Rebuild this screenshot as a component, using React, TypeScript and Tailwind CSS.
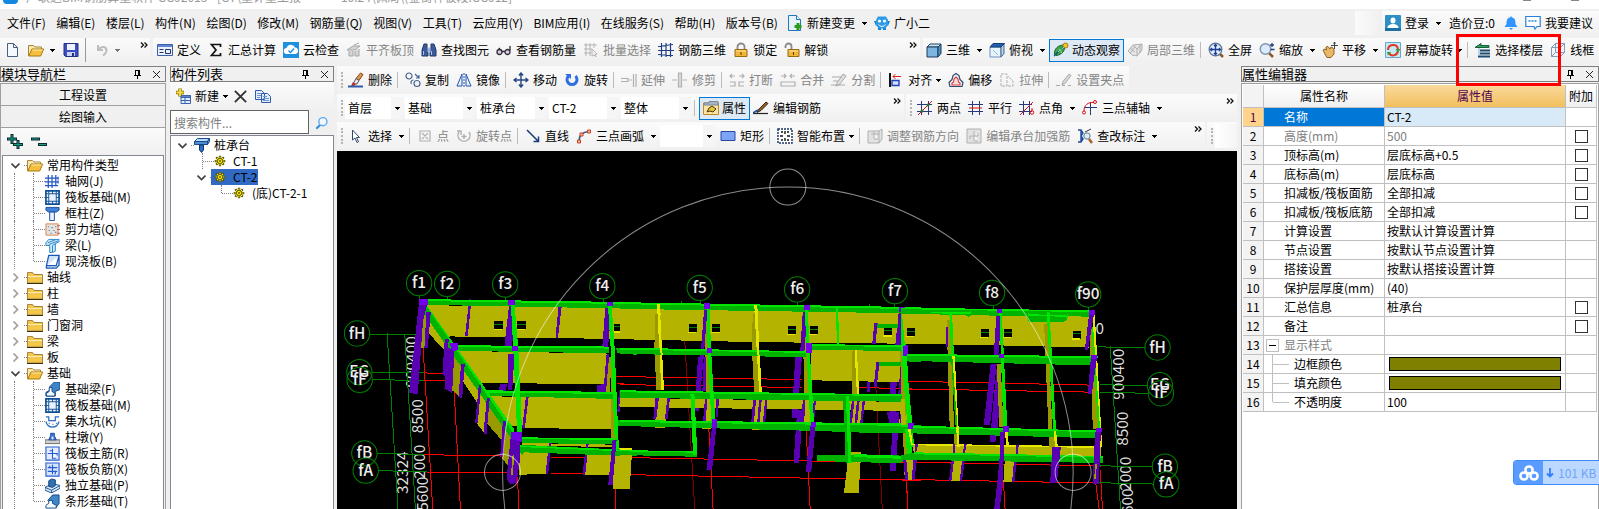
import { Fragment, type ReactNode } from 'react';
import clsx from 'clsx';

/* ---------- icons (16 x 16) ---------- */

const icons: Record<string, ReactNode> = {
  newFile: <path d="M3.5 1.5h6l4 4v9h-10zM9.5 1.5v4h4" fill="#f4f9ff" stroke="#4a5f7f" />,
  folderOpen: (
    <>
      <path d="M.5 14V3.500h5L7 5h6.500v3" fill="#f9e9b0" stroke="#a9853a" />
      <path d="M.8 14L4 7h11.700l-3 7z" fill="#f5bf3d" stroke="#a9780f" />
      <path d="M4.500 8h10" stroke="#fdeeb0" />
    </>
  ),
  folder: (
    <>
      <path d="M.5 14V3.500h5L7 5.500h8.500V14z" fill="#f3c64c" stroke="#a9853a" />
      <path d="M1 7h14v1H1z" fill="#fdf0b4" />
      <path d="M0 14.500h16" stroke="#3d2f10" />
    </>
  ),
  save: (
    <>
      <path d="M1 1.500h14v13H2.500L1 13z" fill="#3d4fc0" stroke="#23317f" />
      <path d="M4 2h8v6H4z" fill="#eef2ff" />
      <path d="M4 10h8v4H4z" fill="#c9d3f5" />
      <path d="M9 11h2v3H9z" fill="#23317f" />
    </>
  ),
  undo: <path d="M4 3v5h5M4.500 7.500C8 3 13 5 12.500 9c-.3 2.500-2 3.500-3.500 4.500" fill="none" stroke="#bdbdbd" strokeWidth="2" />,
  define: (
    <>
      <path d="M.5 2.500h15v11H.5z" fill="#e9effb" stroke="#3c5da8" />
      <path d="M1 3h14v2H1z" fill="#5f86d4" />
      <path d="M2.500 7.500h4m-4 3h4m2-3h5v4h-5z" fill="none" stroke="#24365f" />
    </>
  ),
  sum: <path d="M12.500 5V2.500h-9L8 8l-4.500 5.500h9V11" fill="none" stroke="#111" strokeWidth="1.700" />,
  cloudCheck: (
    <>
      <path d="M0 0h16v16H0z" fill="#1f8fe0" />
      <path d="M4 12a3 3 0 01-.5-6A4.500 4.500 0 0112 5.500a3.300 3.300 0 01.5 6.500z" fill="#fff" />
      <path d="M5.500 8.500l2 2 3.500-4" fill="none" stroke="#1f8fe0" strokeWidth="1.400" />
    </>
  ),
  alignTop: <path d="M1 8l6-4h7l-5 4zM3 9v5h4V9M9 9v5h4V7M8 3l5-2" fill="#d5d5d5" stroke="#a5a5a5" />,
  binoculars: (
    <>
      <path d="M3 2h3v4l1 2v6H1V8zM10 2h3l2 6v6H9V8l1-2z" fill="#3d5a98" stroke="#22386b" />
      <path d="M7 6h2v4H7zM2.500 9v4m8-4v4" fill="#8fa9dc" stroke="#a9c0ee" />
    </>
  ),
  glasses: <path d="M1 10a2.500 2.500 0 105 0 2.500 2.500 0 10-5 0m8 0a2.500 2.500 0 105 0 2.500 2.500 0 10-5 0M6 9.500h3M1 9l3-3m10 3V4" fill="#dce" stroke="#2c2c34" strokeWidth="1.300" />,
  batch: <path d="M1 3h13M1 7h8M1 11h7M3 1v13M7 1v13M11 1v5M9 7l5 5-2 .5L13 15l-2-2-2 1z" fill="none" stroke="#b4b4b4" />,
  rebar3d: <path d="M0 4.500l15-2M0 8.500h16M0 12.500l15 1M3.500 1v14M8 1v14M12.500 1v14" fill="none" stroke="#1f3d86" strokeWidth="1.200" />,
  lock: (
    <>
      <path d="M4.500 8V4.500a3.500 3 0 017 0V8" fill="none" stroke="#8a8a8a" strokeWidth="1.800" />
      <path d="M2 7.500h12v7H2z" fill="#f2b535" stroke="#9b6b12" />
      <path d="M3 9h10" stroke="#fde7a3" />
      <path d="M7.500 10h1v3h-1z" fill="#5b3c05" />
    </>
  ),
  unlock: (
    <>
      <path d="M1.500 6V4.500a3 3 0 016 0V8" fill="none" stroke="#8a8a8a" strokeWidth="1.800" />
      <path d="M4 7.500h11v7H4z" fill="#f2b535" stroke="#9b6b12" />
      <path d="M5 9h9" stroke="#fde7a3" />
      <path d="M9 10h1v3H9z" fill="#5b3c05" />
    </>
  ),
  cube: (
    <>
      <path d="M1 5l3-3h11l-3 3z" fill="#cfe6f8" stroke="#1d3c5c" />
      <path d="M1 5h11v10H1z" fill="#7db4e0" stroke="#1d3c5c" />
      <path d="M12 5l3-3v9.500L12 15z" fill="#4f8dc2" stroke="#1d3c5c" />
    </>
  ),
  cubeTop: (
    <>
      <path d="M1 5h11v10H1z" fill="#e8f3fc" stroke="#6b93bd" />
      <path d="M12 5l3-3v9.500L12 15z" fill="#b8d4ec" stroke="#3d628b" />
      <path d="M1 5l3-3.500h11.500L12 5z" fill="#245ea8" stroke="#153e78" />
      <path d="M4 8l5 5" stroke="#8ab6de" />
    </>
  ),
  orbit: (
    <>
      <path d="M1.500 12C1 7 5 3 11 3c2 5-2 10-8 10.500z" fill="#3da54a" stroke="#14652a" />
      <path d="M1 14l3-3 8-7" stroke="#0b4b8c" strokeWidth="1.300" />
      <circle cx="12.500" cy="3.500" r="2.500" fill="#f1c232" stroke="#a57b0a" />
      <path d="M6 7l3 4M5 10l6-5" stroke="#9fe08f" />
    </>
  ),
  local3d: <path d="M1 9l5-6 9-1v6l-5 6-5-1zM6 3l4 4v7M10 7l5-5M3 6l5 4M3 12l5-8M13 3v8" fill="#e5e5e5" stroke="#b0b0b0" />,
  fullscreen: (
    <>
      <path d="M12 12l3 3" stroke="#8c5a22" strokeWidth="2.500" />
      <circle cx="7.500" cy="7.500" r="6.300" fill="#e3eefb" stroke="#5d7395" strokeWidth="1.300" />
      <path d="M7.500 2.500v10M2.500 7.500h10M6 4l1.500-1.500L9 4M6 11l1.500 1.500L9 11M4 6L2.500 7.500 4 9m7-3l1.500 1.500L11 9" fill="none" stroke="#1d3f96" strokeWidth="1.300" />
    </>
  ),
  zoom: (
    <>
      <path d="M10 11l4 4" stroke="#8c5a22" strokeWidth="2.500" />
      <circle cx="6.500" cy="7" r="5.300" fill="#dcebfb" stroke="#7f92ad" strokeWidth="1.400" />
      <path d="M11 3h4M13 1v4M11.500 7.500h4" stroke="#223f7d" strokeWidth="1.300" />
    </>
  ),
  pan: (
    <>
      <path d="M1 8l2-1 1.500 1L4 5l2-.5L8 7l1-2 2 1 1 2v4l-3 3.500H5L3 12z" fill="#e9b765" stroke="#8c6223" />
      <path d="M12.500 0v7M9 3.500h7M11.500 1.500l1-1.500 1 1.500" stroke="#444" fill="none" />
    </>
  ),
  screenRotate: (
    <>
      <path d="M.5.500h15v15H.5z" fill="#c5e7f6" stroke="#63a9cf" />
      <path d="M3 8c0-6 9-7 10-1M13 9c-1 5-7 6-9 2" fill="none" stroke="#df3a24" strokeWidth="2" />
      <path d="M10.500 7h5L13 10.500zM2 10h4L3 13.500z" fill="#3c9a36" />
    </>
  ),
  floors: (
    <>
      <path d="M0 5.500L6 1.500v2h8v2z" fill="#2f9f5b" stroke="#16603c" />
      <path d="M5 8.500h10M5 11.500h10M3 14.500h12" stroke="#1f4a6f" strokeWidth="1.800" />
      <path d="M4 6v8" stroke="#7fb7d7" />
    </>
  ),
  wireframe: <path d="M1.500 5.500h9v9h-9zM5.500 1.500h9v9h-9zM1.500 5.500l4-4M10.500 5.500l4-4M10.500 14.500l4-4M1.500 14.500l4-4" fill="none" stroke="#7f9cb8" />,
  newChange: (
    <>
      <path d="M1.500.500h8l4 4v11h-12z" fill="#e6f3fd" stroke="#1f79bd" />
      <path d="M9.500.500v4h4" fill="#fff" stroke="#1f79bd" />
      <path d="M11 8v7M7.500 11.500h7" stroke="#2b9b1e" strokeWidth="3" />
    </>
  ),
  face: (
    <>
      <path d="M0 6h2l1 4-1 1zM16 6h-2l-1 4 1 1zM4 12h3v3H4zM9 12h3v3H9z" fill="#1683cf" />
      <path d="M2 5l2-3.500h8L14 5v5l-3 3.500H5L2 10z" fill="#2b9be8" />
      <circle cx="5.500" cy="6" r="1.600" fill="#fff" />
      <circle cx="10.500" cy="6" r="1.600" fill="#fff" />
      <path d="M4.500 9.500c2 2.500 5 2.500 7 0" stroke="#fff" fill="none" />
    </>
  ),
  user: (
    <>
      <rect width="16" height="16" rx="1" fill="#2d8fc6" />
      <path d="M5.500 5.500a2.500 3 0 015 0 2.500 3 0 01-5 0M2.500 13c0-3 3-4 5.500-4s5.500 1 5.500 4z" fill="#fff" />
      <path d="M0 13h16v3H0z" fill="#1b6fa4" />
    </>
  ),
  bell: <path d="M8 1l1 1.500c3 .5 3.500 3 3.500 6.500l2 3h-13l2-3c0-3.500.5-6 3.500-6.500zM6 13h4l-2 2z" fill="#3294ff" />,
  chat: (
    <>
      <path d="M.8 1.500h14.400v10H12L10 14l-1-2.500H.8z" fill="#fff" stroke="#2a7fd8" strokeWidth="1.200" />
      <path d="M3.500 6h9" stroke="#2a7fd8" strokeWidth="1.500" strokeDasharray="2 1" />
    </>
  ),
  brush: (
    <>
      <path d="M12.500 1l2.500 1.500-4 6-3-2z" fill="#e2954a" stroke="#7f4919" />
      <path d="M8 6.500l3 2-2 3.500H5z" fill="#e9e9f5" stroke="#555" />
      <path d="M5 10l3 2-2 2H3z" fill="#c52f2f" />
      <path d="M0 14.500h15" stroke="#2c5ba8" strokeWidth="2" />
    </>
  ),
  copy: <path d="M1 4a3 3 0 106 0 3 3 0 10-6 0m8 7.500a3 3 0 106 0 3 3 0 10-6 0M10 2l4 4m0-3v3h-3M8.500 8a2.500 2.500 0 00-2 4" fill="none" stroke="#4a6590" strokeWidth="1.200" />,
  mirror: (
    <>
      <path d="M6 2v12H1zM10 2v12h5z" fill="#e4eefc" stroke="#2456b0" />
      <path d="M8 1v14" stroke="#2456b0" strokeDasharray="2 1" />
    </>
  ),
  move: <path d="M8 1v14M1 8h14M6 3.500L8 1l2 2.500M6 12.500L8 15l2-2.500M3.500 6L1 8l2.500 2M12.500 6L15 8l-2.500 2" fill="none" stroke="#25457f" strokeWidth="1.400" />,
  rotate: (
    <>
      <path d="M4.500 4a5 5 0 107 0" fill="none" stroke="#2f6fe0" strokeWidth="3" />
      <path d="M1 2h6v5z" fill="#2f6fe0" />
    </>
  ),
  extend: <path d="M0 6.500h7v3H0M8 8h3M12.500 2v13M15 2v13" fill="none" stroke="#b0b0b0" strokeWidth="1.200" />,
  trim: <path d="M0 8h5M11 8h4M6.500 1v14h3V1z" fill="#ddd" stroke="#b0b0b0" strokeWidth="1.200" />,
  breakLine: <path d="M1 4h5m-3-2L1 4l2 2M15 4h-5m3-2l2 2-2 2M1 10h5v4H1m14-4h-5v4h5" fill="none" stroke="#b0b0b0" strokeWidth="1.200" />,
  merge: <path d="M1 4h5m-2-2l2 2-2 2M15 4h-5m2-2l-2 2 2 2M1 10h14v4H1z" fill="none" stroke="#b0b0b0" strokeWidth="1.200" />,
  split: <path d="M1 5h10M0 13h14M2 9h5M12 2l3 2-7 9-3 1 1-3z" fill="#e0e0e0" stroke="#a9a9a9" />,
  align: (
    <>
      <path d="M2 1v14" stroke="#111" strokeWidth="2" />
      <path d="M5 4.500h8M7.500 2L5 4.500 7.500 7" fill="none" stroke="#d22" />
      <path d="M4 8.500h7v5H4z" fill="#cfe0ff" stroke="#2342b4" strokeWidth="1.400" />
    </>
  ),
  offset: (
    <>
      <path d="M8 1.500l3 2 1 4 3 3-1 4H2l-1-4 3-3 1-4z" fill="#eef3fa" stroke="#2d496e" strokeWidth="1.200" />
      <path d="M8 5l2 2 .5 3 1.500 1v2H4v-2l1.500-1L6 7z" fill="#ffdcdc" stroke="#d94343" strokeWidth="1.200" />
    </>
  ),
  stretch: <path d="M2 2h6v12H2zM9 14h5V9L9 4" fill="none" stroke="#b0b0b0" strokeDasharray="3 1" />,
  grip: <path d="M0 13.500h4m2 0h3m3 0h3M13 2l2 1.500-6 8-3 1 1-3z" fill="#d8d8d8" stroke="#a9a9a9" />,
  props: (
    <>
      <path d="M.5 3h15v11.500H.5z" fill="#fbe3a6" stroke="#c38a22" />
      <path d="M1 3h5v-1.500h9V5H1z" fill="#a8b5c8" stroke="#7c8798" />
      <path d="M4 12l2-4 3-2 4 3-3 3-3-1z" fill="#e7c33a" stroke="#4b3a08" />
    </>
  ),
  editRebar: (
    <>
      <path d="M0 13.500h15" stroke="#222" strokeWidth="1.200" />
      <path d="M13 2l2 1.500-7 7-4 2 2-3.500z" fill="#8c5f2a" stroke="#3c2a10" />
      <path d="M0 13l5-3" stroke="#1f4aa0" strokeWidth="1.600" />
    </>
  ),
  twoPoint: (
    <>
      <path d="M0 4.500h15M0 11.500h15M4.500 1v14M11.500 1v14" stroke="#27387f" />
      <path d="M1 15L15 1" stroke="#d11" />
      <circle cx="5" cy="11" r="1.500" fill="#27761e" />
      <circle cx="11" cy="5" r="1.500" fill="#27761e" />
    </>
  ),
  parallel: (
    <>
      <path d="M0 4.500h15M0 11.500h15M4.500 1v14M11.500 1v14" stroke="#27387f" />
      <path d="M1 8h13" stroke="#d11" />
    </>
  ),
  pointAngle: (
    <>
      <path d="M0 4.500h13M0 11.500h13M4.500 1v14M10.500 1v14" stroke="#27387f" />
      <path d="M1 15L14 2M13 8v3" stroke="#d11" />
      <circle cx="13" cy="12.500" r="1.800" fill="none" stroke="#d11" />
    </>
  ),
  threeAxis: (
    <>
      <path d="M2 7.500h13M8.500 2v13" stroke="#27387f" />
      <path d="M2 11C2 5 6 2 12 2.500" fill="none" stroke="#d11" />
      <circle cx="2" cy="12.500" r="1.500" fill="none" stroke="#d11" />
      <circle cx="13" cy="2" r="1.500" fill="none" stroke="#d11" />
    </>
  ),
  cursor: <path d="M4.500 2v10l2.500-2 2 4.500 1.500-.8L8.500 9.500h3z" fill="#fff" stroke="#32486f" />,
  point: <path d="M3 3h10v10H3zM5 5l6 6M11 5l-6 6" fill="none" stroke="#b0b0b0" strokeWidth="1.200" />,
  rotatePoint: <path d="M3 4a6 6 0 1010 0M1 3h4v4M8 6v5M5.500 8.500h5" fill="none" stroke="#b0b0b0" strokeWidth="1.400" />,
  line: <path d="M2 2l11 11M13.500 8.500v5h-5" fill="none" stroke="#1b3a78" strokeWidth="1.500" />,
  arc: (
    <>
      <path d="M3 13C3 7 7 4 13 3.500" fill="none" stroke="#27588f" strokeWidth="1.500" />
      <path d="M1.500 12h3v3h-3zM4 5h3v3H4zM11.500 2h3v3h-3z" fill="#f6b7a4" stroke="#c8401f" />
    </>
  ),
  rect: <path d="M1 3.500h14v9H1z" fill="#7fa4f5" stroke="#2547a8" />,
  smart: (
    <>
      <path d="M1 1h14v14H1z" fill="#fff" stroke="#1d3763" strokeWidth="1.500" strokeDasharray="2 1" />
      <path d="M8 3v3M8 10v3M3 8h3M10 8h3M4 4h2M10 4h2M4 12h2M10 12h2" stroke="#111" strokeWidth="1.400" />
    </>
  ),
  direction: <path d="M1 3h11v12H1zM4 6h8M7 3v8h4M12 3l3-2v10l-3 4" fill="#e2e2e2" stroke="#b0b0b0" />,
  strengthen: <path d="M1 1h14v14H1zM8 3v10h4M4 8h8V5M4 8v3" fill="#e2e2e2" stroke="#b0b0b0" />,
  annotate: (
    <>
      <path d="M1 2h3l2 3-2 3 2 3-2 3H1M4 2v12" fill="none" stroke="#1c4a9c" strokeWidth="1.400" />
      <path d="M12 11l3 4" stroke="#a56324" strokeWidth="2.500" />
      <circle cx="10" cy="8" r="3.200" fill="#d8ebf8" stroke="#68788d" />
      <path d="M8 4l6-3" stroke="#333" />
    </>
  ),
  addItem: (
    <>
      <path d="M6 7.500h9.500v8H6z" fill="#e2edfc" stroke="#3c62ae" />
      <path d="M6 7.500h9.500v2H6zM10 10v5M6 12.500h9" fill="#5784d6" stroke="#3c62ae" />
      <path d="M5 .5v8M1 4.500h8" stroke="#8c7400" strokeWidth="3.400" />
      <path d="M5 1v7M1.500 4.500h7" stroke="#f6e04a" strokeWidth="1.800" />
    </>
  ),
  remove: <path d="M2 2l12 12M14 2L2 14" stroke="#333" strokeWidth="2" />,
  duplicate: (
    <>
      <path d="M.5 2.500h6l3 3v6h-9zM6.500 5.500h6l3 3v6h-9z" fill="#e3eefc" stroke="#2f5ca8" />
      <path d="M2 5.500h4M2 7.500h4M2 9.500h3M8 8.500h4M8 10.500h6M8 12.500h6" stroke="#6d95d4" />
    </>
  ),
  search: (
    <>
      <path d="M6 10l-4.500 4.500" stroke="#3a8de0" strokeWidth="2.500" />
      <circle cx="9" cy="6.500" r="4.600" fill="#f3faff" stroke="#5aa9ec" strokeWidth="1.600" />
    </>
  ),
  pileCap: (
    <>
      <path d="M.5 4.500l3-3h12l-2 3z" fill="#b7dafc" stroke="#1d4a88" />
      <path d="M.5 4.500h13v3h-13zM13.500 4.500l2-3v3l-2 3z" fill="#4d8ed6" stroke="#1d4a88" />
      <path d="M5.500 8h4v5l-2 2.500-2-2.500z" fill="#2b6fc0" stroke="#123a70" />
    </>
  ),
  gear: (
    <>
      <path d="M8 1v14M1 8h14M3 3l10 10M13 3L3 13" stroke="#4d4800" strokeWidth="3" />
      <path d="M8 2v12M2 8h12M4 4l8 8M12 4l-8 8" stroke="#ffee00" strokeWidth="1.500" />
      <circle cx="8" cy="8" r="3.500" fill="#ffee00" stroke="#4d4800" />
      <circle cx="8" cy="8" r="1.200" fill="#4d4800" />
    </>
  ),
  axisGrid: <path d="M0 4.500h14M0 8.500h14M0 12.500h14M3.500 1v14M7.500 1v14M11.500 1v12M14 3v3M14 7v3" fill="none" stroke="#2456c4" strokeWidth="1.300" />,
  raft: (
    <>
      <path d="M1 1h14v14H1z" fill="#eaf4ff" stroke="#0f4f96" strokeWidth="1.800" />
      <path d="M4 4h8v8H4zM4 1v3M8 1v3M12 1v3M4 12v3M8 12v3M12 12v3M1 4h3M1 8h3M1 12h3M12 4h3M12 8h3M12 12h3" fill="none" stroke="#0f4f96" />
    </>
  ),
  column: (
    <>
      <path d="M1 1.500h14v3l-3 2H4l-3-2z" fill="#3f82dc" stroke="#1b4b9c" />
      <path d="M5 6.500h5v9H5z" fill="#eaf3ff" stroke="#1b4b9c" />
    </>
  ),
  shearWall: (
    <>
      <path d="M1 2h13v12H1z" fill="#e3e3e3" stroke="#d9824f" />
      <path d="M3 5h1m3 1h1m3-1h1M4 9h1m4 0h1m-4 3h1m4-1h1" stroke="#555" strokeWidth="1.200" />
      <path d="M13 4h3M13 8h3M13 12h3" stroke="#c8501a" />
    </>
  ),
  beam: (
    <>
      <path d="M1 5l3-3.500h11V4l-4 2v8l-3 1.500H5V8H1z" fill="#cdeafa" stroke="#2480c4" />
      <path d="M3 5l8-3M4 7l10-4M8 8v7M11 6l-3 2" stroke="#2480c4" fill="none" />
    </>
  ),
  slab: <path d="M4 1.500h11l-3 11H1.500zM1.500 12.500v2.500H12l3-3V1.500" fill="#cfe4fb" stroke="#1d57b5" strokeWidth="1.300" />,
  footBeam: (
    <>
      <path d="M1 15v-4l4-2V5l5-5h6v8l-5 2v5z" fill="#3f86c8" stroke="#154a85" />
      <path d="M1.500 15v-3l3-2V6h3v4l3 2v3z" fill="#f3f9ff" stroke="#154a85" />
    </>
  ),
  pit: <path d="M1 3h3v4h7V3h4M1 8c1 4 4 6 7 6s6-2 7-6M4 10h1m3 1h1m3-1h1" fill="none" stroke="#2b6cc4" strokeWidth="1.300" />,
  pier: (
    <>
      <path d="M0 10.500h16v4H0z" fill="#cfcfcf" stroke="#666" />
      <path d="M4 10.500L6 6V3.500h4V6l2 4.500z" fill="#3c74d8" stroke="#1f489c" />
      <path d="M7 7h2v3H7z" fill="#e8f0ff" />
    </>
  ),
  mainBar: <path d="M1 1h14v14H1zM8 3v10h4M8 5H5M3 8h10v2" fill="#e3edff" stroke="#245bd0" strokeWidth="1.200" />,
  negBar: <path d="M1 1h14v14H1zM8 3v10M3 6h10M3 10h10M5 4v2M11 10v3" fill="#d6e4fb" stroke="#245bd0" strokeWidth="1.200" />,
  isolated: (
    <>
      <path d="M0 10l8-4 8 2v3l-9 5-7-3z" fill="#d7eafb" stroke="#1a4f8c" />
      <path d="M4 3l3-2 4 1v6l-3 2-4-1z" fill="#2f72b5" stroke="#123f75" />
      <path d="M0 10l7 3 9-5M7 13v3" fill="none" stroke="#1a4f8c" />
    </>
  ),
  strip: (
    <>
      <path d="M3 7l5-6h7v9l-3 4z" fill="#3f86c8" stroke="#154a85" />
      <path d="M1 15v-3l3-2V7h4v3l4 2v3z" fill="#f3f9ff" stroke="#154a85" />
    </>
  ),
};

function Icon({ name, className = 'size-4' }: { name: string; className?: string }) {
  return (
    <svg viewBox="0 0 16 16" className={clsx('shrink-0', className)} fill="none" aria-hidden="true">
      {icons[name]}
    </svg>
  );
}

function Caret() {
  return (
    <svg viewBox="0 0 5 3" className="h-[3px] w-[5px] shrink-0" shapeRendering="crispEdges" aria-hidden="true">
      <path d="M0 0h5L2.500 3z" fill="currentColor" />
    </svg>
  );
}

function More({ className }: { className?: string }) {
  return (
    <button className={clsx('self-start pt-1', className)} aria-label="更多">
      <svg viewBox="0 0 8 6" className="h-[6px] w-2" fill="none" aria-hidden="true">
        <path d="M1 .5L3.500 3 1 5.500M4.500.500L7 3 4.500 5.500" stroke="#111" strokeWidth="1.300" />
      </svg>
    </button>
  );
}

const Sep = () => <span className="mr-1 ml-px h-4 w-px shrink-0 bg-[#bcbcbc]" />;

function Grip() {
  return <span className="mr-0.5 ml-1 h-4 w-0 shrink-0 border-l-2 border-dotted border-[#b4b4b4]" />;
}

type ToolProps = { icon: string; label: string; off?: boolean; active?: boolean; caret?: 'near' | 'far' };

function Tool({ icon, label, off, active, caret }: ToolProps) {
  return (
    <button
      disabled={off}
      className={clsx(
        'flex h-[23px] shrink-0 items-center whitespace-nowrap',
        active ? 'gap-[3px] border border-[#0078d7] bg-[#dde9f5] px-[3px]' : 'gap-1 pr-1 pl-[3px]',
        off && 'text-[#858585]',
      )}
    >
      <Icon name={icon} />
      {label}
      {caret && (
        <span className={clsx(caret === 'far' && 'pl-[3px]')}>
          <Caret />
        </span>
      )}
    </button>
  );
}

function Combo({ label, value, className }: { label: string; value: string; className: string }) {
  return (
    <span className={clsx('relative mr-0.5 h-[22px] shrink-0 bg-white', className)}>
      <select aria-label={label} className="h-full w-full appearance-none bg-transparent pl-[3px] leading-4">
        <option>{value}</option>
      </select>
      <span className="pointer-events-none absolute inset-y-0 right-0 flex w-3 items-center justify-center bg-[#f5f5f5]">
        <Caret />
      </span>
    </span>
  );
}

const bar = 'flex items-center bg-linear-to-b from-[#fbfbfb] to-[#f0f0f0]';

/* ---------- title, menu, main toolbar ---------- */

const menus = ['文件(F)', '编辑(E)', '楼层(L)', '构件(N)', '绘图(D)', '修改(M)', '钢筋量(Q)', '视图(V)', '工具(T)', '云应用(Y)', 'BIM应用(I)', '在线服务(S)', '帮助(H)', '版本号(B)'];

function TitleBar() {
  return (
    <header className="flex h-[9px] shrink-0 items-end overflow-hidden bg-white pr-5 text-[#999]">
      <span className="mb-[5px] ml-[3px] h-4 w-[15px] rounded bg-[#1488e0]" />
      <span className="mb-1 ml-2 whitespace-pre">广联达BIM钢筋算量软件 GGJ2013 - [GT\量计量工报</span>
      <span className="mb-1 ml-10 whitespace-pre">10.24\佩局\(金街神板段.GGJ12]</span>
      <span className="mb-2 ml-auto h-px w-2 bg-[#888]" />
      <span className="mb-2 ml-10 h-2 w-2 border border-[#888]" />
    </header>
  );
}

function MenuBar() {
  return (
    <nav className="flex h-7 shrink-0 items-center">
      <div className="flex w-[778px] shrink-0 justify-between pl-[7px]">
        {menus.map((m) => (
          <button key={m} className="whitespace-nowrap">{m}</button>
        ))}
      </div>
      <div className="ml-[6px] flex">
        <Tool icon="newChange" label="新建变更" caret="far" />
        <Tool icon="face" label="广小二" />
      </div>
      <span className="ml-auto h-6 w-[25px] bg-linear-to-r from-[#fbfbfb] to-[#f0f0f0]" />
      <div className={clsx(bar, 'ml-0.5 h-6 pr-[6px]')}>
        <Tool icon="user" label="登录" caret="far" />
        <span className="mr-2 ml-1">造价豆:0</span>
        <button aria-label="通知" className="mr-[6px]"><Icon name="bell" /></button>
        <button className="flex items-center gap-1 whitespace-nowrap"><Icon name="chat" />我要建议</button>
      </div>
    </nav>
  );
}

function MainToolbar() {
  return (
    <div className="flex h-[29px] shrink-0 gap-[3px] pt-px pb-1">
      <div className={clsx(bar, 'w-[150px] shrink-0 pl-1')}>
        <button aria-label="新建"><Icon name="newFile" /></button>
        <button aria-label="打开" className="ml-2 flex items-center gap-[6px]"><Icon name="folderOpen" /><Caret /></button>
        <button aria-label="保存" className="ml-2"><Icon name="save" /></button>
        <span className="ml-[6px] h-6 w-px bg-[#999]" />
        <button disabled aria-label="撤销" className="ml-2 flex items-center gap-[5px] text-[#777]"><Icon name="undo" /><Caret /></button>
        <More className="mr-0.5 ml-auto" />
      </div>
      <div className={clsx(bar, 'w-[767px] shrink-0 pl-px')}>
        <Tool icon="define" label="定义" />
        <Tool icon="sum" label="汇总计算" />
        <Tool icon="cloudCheck" label="云检查" />
        <Tool icon="alignTop" label="平齐板顶" off />
        <Tool icon="binoculars" label="查找图元" />
        <Tool icon="glasses" label="查看钢筋量" />
        <Tool icon="batch" label="批量选择" off />
        <Tool icon="rebar3d" label="钢筋三维" />
        <Tool icon="lock" label="锁定" />
        <Tool icon="unlock" label="解锁" />
        <More className="mr-[3px] ml-auto" />
      </div>
      <div className={clsx(bar, 'min-w-0 flex-1')}>
        <Tool icon="cube" label="三维" caret="far" />
        <Tool icon="cubeTop" label="俯视" caret="far" />
        <Tool icon="orbit" label="动态观察" active />
        <Tool icon="local3d" label="局部三维" off />
        <Sep />
        <Tool icon="fullscreen" label="全屏" />
        <Tool icon="zoom" label="缩放" caret="far" />
        <Tool icon="pan" label="平移" caret="far" />
        <Tool icon="screenRotate" label="屏幕旋转" caret="near" />
        <Sep />
        <Tool icon="floors" label="选择楼层" />
        <Tool icon="wireframe" label="线框" />
      </div>
    </div>
  );
}

/* ---------- side panels ---------- */

function PanelHeader({ title }: { title: string }) {
  return (
    <div className="flex h-4 shrink-0 items-center border border-[#808080] pr-1">
      <h2 className="text-[13px] leading-[14px]">{title}</h2>
      <button aria-label="固定" className="mr-[10px] ml-auto">
        <svg viewBox="0 0 9 10" className="h-[10px] w-[9px]" shapeRendering="crispEdges" fill="none" aria-hidden="true">
          <path d="M2.500 6V1.500h4V6M5.500 1v5M1 6.500h7M4.500 7v3" stroke="#000" />
        </svg>
      </button>
      <button aria-label="关闭">
        <svg viewBox="0 0 9 9" className="size-[9px]" fill="none" aria-hidden="true">
          <path d="M1 1l7 7M8 1L1 8" stroke="#222" />
        </svg>
      </button>
    </div>
  );
}

function Chevron({ open }: { open?: boolean }) {
  return (
    <svg viewBox="0 0 9 9" className="size-[9px] shrink-0" fill="none" aria-hidden="true">
      <path d={open ? 'M.500 2.500l4 4 4-4' : 'M2.500.500l4 4-4 4'} stroke={open ? '#404040' : '#a0a0a0'} strokeWidth="1.700" />
    </svg>
  );
}

const groups: { name: string; items?: [string, string][] }[] = [
  {
    name: '常用构件类型',
    items: [['axisGrid', '轴网(J)'], ['raft', '筏板基础(M)'], ['column', '框柱(Z)'], ['shearWall', '剪力墙(Q)'], ['beam', '梁(L)'], ['slab', '现浇板(B)']],
  },
  { name: '轴线' },
  { name: '柱' },
  { name: '墙' },
  { name: '门窗洞' },
  { name: '梁' },
  { name: '板' },
  {
    name: '基础',
    items: [['footBeam', '基础梁(F)'], ['raft', '筏板基础(M)'], ['pit', '集水坑(K)'], ['pier', '柱墩(Y)'], ['mainBar', '筏板主筋(R)'], ['negBar', '筏板负筋(X)'], ['isolated', '独立基础(P)'], ['strip', '条形基础(T)']],
  },
];

const dots = 'shrink-0 border-dotted border-[#808080]';

function ModulePanel() {
  return (
    <aside className="flex w-[166px] shrink-0 flex-col">
      <PanelHeader title="模块导航栏" />
      <div className="mt-px flex min-h-0 flex-1 flex-col border-x border-t border-[#a0a0a0]">
        <button className="h-[22px] shrink-0 border-b border-[#a0a0a0]">工程设置</button>
        <button className="h-[22px] shrink-0 border-b border-[#a0a0a0]">绘图输入</button>
        <div className={clsx(bar, 'h-[27px] shrink-0 pl-[6px]')}>
          <button aria-label="全部展开">
            <svg viewBox="0 0 16 16" className="size-4" fill="none" aria-hidden="true">
              <path d="M5 0v10M0 5h10M11 6v9M6 10.500h10" stroke="#0b2b2b" strokeWidth="3" />
              <path d="M5 1v8M1 5h8M11 7v7M7 10.500h8" stroke="#11a08c" />
            </svg>
          </button>
          <button aria-label="全部折叠" className="ml-2">
            <svg viewBox="0 0 16 16" className="size-4" fill="none" aria-hidden="true">
              <path d="M0 5h9M7 10.500h9" stroke="#0b2b2b" strokeWidth="3" />
              <path d="M1 5h7M8 10.500h7" stroke="#11a08c" />
            </svg>
          </button>
        </div>
        <ul className="mx-px min-h-0 flex-1 overflow-hidden border-x border-t border-[#828790] bg-white pt-px">
          {groups.map((g) => (
            <li key={g.name}>
              <div className="flex h-4 items-center pl-2">
                <Chevron open={!!g.items} />
                <span className={clsx(dots, 'ml-1 w-[3px] border-t')} />
                <Icon name={g.items ? 'folderOpen' : 'folder'} className="mr-1 size-4" />
                {g.name}
              </div>
              {g.items && (
                <ul>
                  {g.items.map(([icon, label], i) => (
                    <li key={label} className="flex h-4 items-center">
                      <span className={clsx(dots, 'h-4 w-3 border-r')} />
                      <span className={clsx(dots, 'w-[19px] self-start border-r', i === g.items!.length - 1 ? 'h-2' : 'h-4')} />
                      <span className={clsx(dots, 'w-[11px] border-t')} />
                      <Icon name={icon} className="mr-[5px] size-[15px]" />
                      {label}
                    </li>
                  ))}
                </ul>
              )}
            </li>
          ))}
        </ul>
      </div>
    </aside>
  );
}

function ComponentPanel() {
  return (
    <aside className="flex w-[164px] shrink-0 flex-col">
      <PanelHeader title="构件列表" />
      <div className={clsx(bar, 'h-7 shrink-0 pl-0.5')}>
        <Tool icon="addItem" label="新建" caret="near" />
        <button aria-label="删除构件" className="mr-[7px] ml-px"><Icon name="remove" className="size-[15px]" /></button>
        <button aria-label="复制构件"><Icon name="duplicate" /></button>
      </div>
      <div className="flex h-[25px] shrink-0">
        <input aria-label="搜索构件" placeholder="搜索构件..." className="h-6 min-w-0 flex-1 border border-[#646464] bg-white px-[3px] placeholder:text-[#808080]" />
        <button aria-label="搜索" className="flex w-[25px] items-center justify-center"><Icon name="search" className="size-[14px]" /></button>
      </div>
      <ul className="min-h-0 flex-1 overflow-hidden border-x border-t border-[#828790] bg-white pt-px">
        <li className="flex h-4 items-center pl-[7px]">
          <Chevron open />
          <span className={clsx(dots, 'ml-1 w-[3px] border-t')} />
          <Icon name="pileCap" className="mr-1 size-4" />
          桩承台
        </li>
        <li className="flex h-4 items-center pl-[31px]">
          <span className={clsx(dots, 'h-4 border-l')} />
          <span className={clsx(dots, 'w-[11px] border-t')} />
          <Icon name="gear" className="size-3" />
          <span className="ml-[7px]">CT-1</span>
        </li>
        <li className="flex h-4 items-center pl-[26px]">
          <Chevron open />
          <span className={clsx(dots, 'ml-1 w-px border-t')} />
          <span className="flex h-4 items-center bg-[#316ac5] pr-px pl-[3px]">
            <Icon name="gear" className="size-3" />
            <span className="ml-[7px]">CT-2</span>
          </span>
        </li>
        <li className="flex h-4 items-center pl-[50px]">
          <span className={clsx(dots, 'h-2 self-start border-l')} />
          <span className={clsx(dots, 'w-[11px] border-t')} />
          <Icon name="gear" className="size-3" />
          <span className="ml-[7px]">(底)CT-2-1</span>
        </li>
      </ul>
    </aside>
  );
}

/* ---------- drawing toolbars ---------- */

function EditBars() {
  return (
    <div className="flex shrink-0 flex-col pb-px">
      <div className="flex h-7">
        <div className={clsx(bar, 'pr-px')}>
          <Grip />
          <Tool icon="brush" label="删除" />
          <Sep />
          <Tool icon="copy" label="复制" />
          <Tool icon="mirror" label="镜像" />
          <Sep />
          <Tool icon="move" label="移动" />
          <Tool icon="rotate" label="旋转" />
          <Sep />
          <Tool icon="extend" label="延伸" off />
          <Tool icon="trim" label="修剪" off />
          <Sep />
          <Tool icon="breakLine" label="打断" off />
          <Tool icon="merge" label="合并" off />
          <Tool icon="split" label="分割" off />
          <Sep />
          <Tool icon="align" label="对齐" caret="near" />
          <Tool icon="offset" label="偏移" />
          <Tool icon="stretch" label="拉伸" off />
          <Sep />
          <Tool icon="grip" label="设置夹点" off />
        </div>
      </div>
      <div className="flex h-7 gap-0.5">
        <div className={clsx(bar, 'w-[567px] shrink-0')}>
          <Grip />
          <Combo label="楼层" value="首层" className="w-[58px]" />
          <Combo label="构件类别" value="基础" className="w-[70px]" />
          <Combo label="构件类型" value="桩承台" className="w-[70px]" />
          <Combo label="构件" value="CT-2" className="w-[70px]" />
          <Combo label="单元" value="整体" className="w-[70px]" />
          <Sep />
          <Tool icon="props" label="属性" active />
          <Tool icon="editRebar" label="编辑钢筋" />
          <More className="mr-[3px] ml-auto" />
        </div>
        <div className={clsx(bar, 'min-w-0 flex-1')}>
          <Grip />
          <Tool icon="twoPoint" label="两点" />
          <Tool icon="parallel" label="平行" />
          <Tool icon="pointAngle" label="点角" caret="far" />
          <Tool icon="threeAxis" label="三点辅轴" caret="far" />
          <More className="mr-[3px] ml-auto" />
        </div>
      </div>
      <div className="flex h-7 gap-0.5">
        <div className={clsx(bar, 'min-w-0 flex-1')}>
          <Grip />
          <Tool icon="cursor" label="选择" caret="far" />
          <Sep />
          <Tool icon="point" label="点" off />
          <Tool icon="rotatePoint" label="旋转点" off />
          <Sep />
          <Tool icon="line" label="直线" />
          <Tool icon="arc" label="三点画弧" caret="far" />
          <Combo label="弧参数" value="" className="w-[55px]" />
          <Tool icon="rect" label="矩形" />
          <Sep />
          <Tool icon="smart" label="智能布置" caret="near" />
          <Sep />
          <Tool icon="direction" label="调整钢筋方向" off />
          <Tool icon="strengthen" label="编辑承台加强筋" off />
          <Tool icon="annotate" label="查改标注" caret="far" />
          <More className="mr-[3px] ml-auto" />
        </div>
        <div className={clsx(bar, 'w-[30px] shrink-0')}>
          <Grip />
          <span className="h-6 flex-1 bg-linear-to-r from-white to-[#f5f5f5]" />
        </div>
      </div>
    </div>
  );
}

/* ---------- 3D view ---------- */

const WALL = '#b3b300';
const SHADE = '#999900';
const LIT = '#e6e600';
const BEAM = '#00b300';
const TOP = '#00e600';
const COL = '#5a00b3';
const CAP = '#7300e6';
const RED = '#ff0000';
const DARK = '#800000';
const AXIS = '#008000';

type Part = { x: number; lines: [string, string][]; polys: [string, string][]; openings: [number, number][] };

// Three bays of the frame, west to east. Each bay has its own x origin.
const parts: Part[] = [
  {
    x: 0,
    lines: [
      [RED, 'M258 262L287 747M350 370L370 747M262 338L330 341M262 360H330M262 583L490 587M270 635L515 637M541 650L545 747M833 650L836 747M830 348L900 349M840 370L900 374M640 590H742M640 640H742M885 592H900M878 643H900'],
      [AXIS, 'M98 222H245M105 337H262M107 358L262 361M120 580L262 582M122 631L270 634M150 218L183 747M203 220L235 747M246 107V118M330 109V118M504 111V122M798 116V126'],
    ],
    polys: [
      [WALL, '270,135 900,145 900,237 370,230 340,228 325,235'],
      [WALL, '360,272 815,280 805,372 440,368 420,365'],
      [WALL, '450,408 830,414 820,507 560,503 500,490'],
      [WALL, '555,548 830,553 830,560 555,556'],
      [WALL, '545,575 635,577 628,641 545,643'],
      [WALL, '750,577 825,578 820,645 742,643'],
      [SHADE, '820,280 830,280 832,400 820,400'],
      [SHADE, '820,415 830,415 832,540 820,535'],
      [SHADE, '808,290 822,290 818,395 806,395'],
      [SHADE, '258,150 278,165 268,262 250,262'],
      [WALL, '275,180 325,250 325,272 275,220'],
      [SHADE, '328,255 345,265 340,350 320,345'],
      [SHADE, '342,280 378,315 368,412 335,380'],
      [WALL, '378,330 425,385 422,430 378,365'],
      [WALL, '425,390 455,425 443,520 415,485'],
      [SHADE, '455,430 505,490 498,545 450,490'],
      [SHADE, '502,495 525,520 515,620 492,590'],
      [COL, '396,118 403,118 392,228 384,226'],
      [COL, '665,124 675,124 662,234 655,232'],
      [COL, '517,125 532,125 525,262 501,262'],
      [COL, '513,280 532,280 525,390 512,390'],
      [COL, '488,370 510,370 505,392 486,392'],
      [COL, '805,128 825,128 812,262 795,262'],
      [COL, '808,280 816,280 806,395 780,395 780,374 800,372'],
      [COL, '568,395 576,395 563,503 555,503'],
      [COL, '637,533 645,533 633,640 625,640'],
      [COL, '748,535 756,535 744,643 736,643'],
      [COL, '845,392 855,392 848,455 840,455'],
      [BEAM, '270,118 900,126 900,146 270,134'],
      [TOP, '270,117 900,126 900,132 270,123'],
      [BEAM, '360,256 815,260 815,279 360,272'],
      [TOP, '360,255 815,259 815,265 360,261'],
      [BEAM, '440,390 830,395 830,416 452,407'],
      [TOP, '440,390 830,395 830,401 440,397'],
      [BEAM, '550,533 830,537 830,552 555,548'],
      [TOP, '550,531 830,534 830,539 550,536'],
      [WALL, '850,410 900,412 900,438 846,436'],
      [BEAM, '835,262 900,264 900,284 840,278'],
      [BEAM, '850,390 900,392 900,412 850,410'],
      [BEAM, '840,480 900,482 900,498 840,497'],
      [BEAM, '255,132 262,130 530,515 520,532 255,152'],
      [TOP, '262,130 268,134 532,508 528,518'],
      [TOP, '521,133 532,133 543,258 555,520 540,520 528,260'],
      [TOP, '812,135 823,135 832,262 845,572 834,572 820,262'],
      [WALL, '828,575 884,575 876,686 828,686'],
      [LIT, '845,562 884,562 884,582 878,582 878,570 845,570'],
      [BEAM, '545,553 900,570 900,588 560,576 555,584 540,562'],
      [TOP, '545,555 900,570 900,575 545,560'],
      [COL, '245,135 270,135 258,180 242,402 216,398'],
      [CAP, '246,118 272,118 272,134 246,134'],
      [COL, '268,155 281,155 272,265 262,262'],
      [COL, '323,235 335,235 325,350 316,340'],
      [COL, '330,262 352,270 345,398 322,385'],
      [CAP, '338,249 363,249 361,270 345,274'],
      [COL, '372,310 383,310 375,415 364,410'],
      [COL, '425,375 432,375 422,488 414,488'],
      [COL, '449,412 458,412 448,523 439,518'],
      [COL, '497,483 506,483 498,592 489,588'],
      [COL, '520,535 550,530 548,600 538,668 520,672 508,655'],
      [SHADE, '526,585 532,585 526,645 521,645'],
      [CAP, '520,516 555,516 553,545 520,535'],
      [CAP, '513,120 534,120 534,133 513,133'],
      [CAP, '524,256 543,256 543,272 524,272'],
      [CAP, '808,126 826,126 826,138 808,138'],
      [COL, '826,538 838,538 826,673 813,673'],
    ],
    openings: [[471, 183], [540, 183], [831, 190]],
  },
  {
    x: 849,
    lines: [
      [DARK, 'M193 240L223 747M765 365L785 747'],
      [RED, 'M0 349L545 358M0 373L545 382M715 381L900 388M36 592L680 604M30 643L900 660M265 500L278 747M557 510L569 747M857 650L862 747M868 364H900'],
      [AXIS, 'M241 121V130M531 126V136M823 131V142M184 123V130M748 131V138'],
    ],
    polys: [
      [COL, '233,290 250,290 235,452 222,452'],
      [COL, '525,280 545,280 530,472 513,472'],
      [COL, '530,450 547,450 536,608 519,608'],
      [COL, '808,366 828,366 824,500 810,500'],
      [COL, '798,455 836,455 825,632 807,632 815,520'],
      [WALL, '0,145 900,155 900,252 755,249 420,246 0,237'],
      [WALL, '570,268 845,272 845,366 570,360'],
      [WALL, '0,413 860,425 855,452 0,440'],
      [SHADE, '105,160 117,160 130,390 108,390 102,260'],
      [SHADE, '397,160 410,160 423,395 401,395 394,260'],
      [SHADE, '696,260 708,260 715,402 694,402'],
      [SHADE, '250,160 260,160 272,395 256,395'],
      [SHADE, '545,160 556,160 568,400 552,400'],
      [SHADE, '838,200 848,200 858,405 840,405'],
      [LIT, '110,132 118,132 131,390 123,390'],
      [LIT, '401,135 410,135 424,396 416,396'],
      [LIT, '701,255 708,255 716,402 709,402'],
      [WALL, '107,400 145,400 135,503 104,503'],
      [WALL, '400,400 438,400 430,508 394,508'],
      [WALL, '695,405 732,405 722,488 688,488'],
      [WALL, '255,400 280,400 272,505 246,505'],
      [WALL, '548,400 575,400 568,508 543,508'],
      [WALL, '840,405 868,405 868,490 836,490'],
      [WALL, '0,562 36,562 28,686 0,686'],
      [LIT, '0,562 36,562 36,570 0,570'],
      [COL, '252,135 262,135 250,290 240,290'],
      [COL, '250,290 258,290 256,392 246,392'],
      [COL, '548,137 562,137 552,270 538,290'],
      [COL, '835,148 850,148 840,255 824,255'],
      [COL, '843,280 852,280 842,400 833,400'],
      [COL, '107,393 118,393 108,475 99,475'],
      [COL, '143,395 151,395 142,475 134,475'],
      [COL, '255,395 262,395 256,485 248,485'],
      [COL, '289,397 297,397 292,470 286,470'],
      [COL, '400,397 409,397 400,488 392,488'],
      [COL, '418,397 426,397 417,488 410,488'],
      [COL, '436,397 443,397 434,488 427,488'],
      [COL, '547,402 555,402 551,490 544,490'],
      [COL, '581,400 588,400 582,470 576,470'],
      [COL, '696,404 704,404 694,488 686,488'],
      [COL, '711,404 719,404 710,488 702,488'],
      [COL, '728,404 735,404 726,488 719,488'],
      [COL, '845,405 852,405 844,490 837,490'],
      [COL, '740,365 750,365 748,395 738,395'],
      [BEAM, '0,127 900,142 900,160 0,146'],
      [TOP, '0,126 900,141 900,147 0,132'],
      [BEAM, '0,263 555,275 555,291 0,281'],
      [TOP, '0,262 555,273 555,278 0,268'],
      [BEAM, '570,252 850,257 845,273 570,268'],
      [TOP, '570,251 850,256 850,261 570,256'],
      [BEAM, '0,390 862,404 862,425 0,412'],
      [TOP, '0,390 862,403 862,408 0,396'],
      [BEAM, '0,480 872,490 872,518 755,518 590,512 0,497'],
      [TOP, '0,479 872,490 872,497 0,485'],
      [BEAM, '0,570 230,574 230,590 180,588 0,584'],
      [TOP, '0,569 220,573 220,577 0,573'],
      [WALL, '685,575 722,575 714,698 670,698'],
      [BEAM, '588,583 880,586 880,610 588,602'],
      [TOP, '700,581 880,588 880,597 700,590'],
      [BEAM, '862,280 900,280 900,304 865,304'],
      [BEAM, '872,495 900,495 900,521 875,518'],
      [LIT, '110,132 118,132 121,165 113,165'],
      [LIT, '401,135 410,135 413,165 404,165'],
      [LIT, '119,262 125,262 127,285 121,285'],
      [LIT, '410,270 416,270 418,295 412,295'],
      [TOP, '258,135 267,135 272,270 285,488 273,488 262,270'],
      [TOP, '553,148 562,148 567,262 581,490 569,490 558,270'],
      [TOP, '845,150 852,150 865,404 881,560 870,560 855,404'],
      [TOP, '210,400 222,400 231,585 218,585'],
      [BEAM, '667,408 676,408 685,608 676,608'],
      [TOP, '676,406 686,406 693,608 683,608'],
      [TOP, '645,140 652,140 657,258 650,258'],
      [BEAM, '768,192 832,192 832,202 768,202'],
      [BEAM, '773,306 840,306 840,316 773,316'],
      [COL, '761,189 771,189 765,250 755,250'],
      [COL, '768,304 777,304 768,382 759,378'],
      [COL, '275,498 288,498 275,630 258,628'],
      [COL, '570,498 585,498 572,635 556,635'],
      [SHADE, '847,515 862,515 862,655 852,655'],
      [WALL, '860,590 882,590 880,660 858,660'],
      [LIT, '862,505 870,505 874,555 865,555'],
      [COL, '880,600 888,600 882,658 874,658'],
      [CAP, '252,129 270,129 268,145 252,145'],
      [CAP, '259,264 275,264 275,278 259,278'],
      [CAP, '549,135 567,135 567,149 549,149'],
      [CAP, '555,249 573,249 573,279 558,279'],
      [CAP, '834,141 852,141 852,155 834,155'],
      [CAP, '845,255 862,255 862,286 850,286'],
      [CAP, '275,477 291,477 290,502 275,502'],
      [CAP, '570,486 587,486 587,499 570,499'],
      [CAP, '862,489 879,489 879,506 862,506'],
    ],
    openings: [[205, 192], [275, 192], [501, 198], [567, 198], [790, 202], [859, 204]],
  },
  {
    x: 1689,
    lines: [
      [RED, 'M20 363L595 375M20 386L595 396M0 605L600 617M0 657L590 668M17 660L22 747M308 660L313 747M585 670L595 747M598 630L605 747'],
      [AXIS, 'M590 260L733 262M597 373L740 377M597 396L742 399M590 616L755 620M590 667L758 671M628 257L659 747M277 136V145M563 141V151'],
    ],
    polys: [
      [COL, '270,310 288,310 268,495 249,495'],
      [COL, '288,320 303,310 292,495 284,545 267,545'],
      [WALL, '0,158 570,165 565,262 370,257 0,250'],
      [WALL, '35,552 600,560 600,592 40,580'],
      [LIT, '35,550 600,558 600,563 35,555'],
      [SHADE, '138,180 150,180 160,500 147,500'],
      [SHADE, '158,510 170,510 174,555 160,555'],
      [SHADE, '430,190 441,190 455,510 443,510'],
      [SHADE, '445,530 460,530 464,560 446,560'],
      [SHADE, '288,310 300,310 308,500 296,500'],
      [SHADE, '565,200 578,200 592,505 576,505'],
      [SHADE, '0,280 12,280 18,490 5,490'],
      [WALL, '15,600 42,600 38,658 18,658'],
      [WALL, '158,600 188,600 180,663 150,663'],
      [WALL, '312,600 345,600 338,665 308,665'],
      [WALL, '0,415 12,415 16,495 0,495'],
      [COL, '137,200 142,200 142,260 136,260'],
      [COL, '288,150 303,150 292,300 278,300'],
      [COL, '44,552 53,552 47,575 42,575'],
      [COL, '158,552 164,552 162,580 156,580'],
      [COL, '190,552 198,552 192,580 187,580'],
      [COL, '346,555 354,555 351,582 345,582'],
      [COL, '38,600 46,600 40,658 33,658'],
      [COL, '153,600 160,600 152,663 145,663'],
      [COL, '184,600 192,600 184,663 177,663'],
      [COL, '340,600 348,600 341,665 334,665'],
      [COL, '8,600 17,600 23,658 14,658'],
      [BEAM, '0,142 580,151 580,170 500,168 500,178 490,184 385,184 375,168 212,165 205,170 195,165 0,160'],
      [TOP, '0,142 580,151 580,156 0,147'],
      [TOP, '90,155 205,157 212,150 212,163 195,162 90,159'],
      [TOP, '382,155 386,162 498,166 502,160 502,175 490,170 382,166'],
      [BEAM, '20,282 590,290 585,315 510,314 20,302'],
      [TOP, '20,281 590,288 590,294 20,287'],
      [BEAM, '0,496 600,512 600,534 0,518'],
      [TOP, '0,495 600,511 600,516 0,501'],
      [TOP, '146,155 154,155 160,290 152,290'],
      [LIT, '154,288 162,288 177,560 170,560'],
      [BEAM, '151,290 155,290 170,500 165,500'],
      [TOP, '296,155 303,155 320,505 308,505'],
      [TOP, '438,155 446,155 466,512 457,512'],
      [LIT, '458,512 466,512 471,560 463,560'],
      [LIT, '312,512 320,512 325,560 317,560'],
      [LIT, '575,165 582,165 604,560 597,560'],
      [TOP, '573,200 577,200 598,510 592,510'],
      [TOP, '0,160 4,160 35,490 20,490 3,290'],
      [LIT, '22,505 30,505 36,550 28,550'],
      [TOP, '14,505 22,505 40,600 20,600'],
      [BEAM, '40,577 605,588 605,608 0,598 0,585'],
      [TOP, '40,576 605,587 605,592 40,582'],
      [COL, '297,515 312,515 306,664 290,664 298,580'],
      [COL, '290,665 308,665 296,747 280,747'],
      [COL, '455,560 480,560 468,668 448,668'],
      [COL, '565,160 580,160 562,268 552,268'],
      [COL, '570,295 588,295 573,402 561,400'],
      [COL, '583,515 600,515 594,670 575,670'],
      [SHADE, '583,610 588,610 585,655 580,655'],
      [CAP, '289,145 305,145 305,158 289,158'],
      [CAP, '294,280 311,280 311,294 294,294'],
      [CAP, '308,496 326,496 326,514 308,514'],
      [CAP, '563,150 581,150 581,164 563,164'],
      [CAP, '570,283 589,283 589,296 570,296'],
      [CAP, '585,502 603,502 603,516 585,516'],
      [CAP, '22,489 38,489 38,505 22,505'],
      [CAP, '8,256 20,256 20,286 8,286'],
    ],
    openings: [[18, 204], [240, 207], [309, 207], [516, 211]],
  },
];

const bubbles: [string, number, number][] = [
  ['f1', 246, 69], ['f2', 330, 71], ['f3', 504, 73], ['f4', 795, 78], ['f5', 1087, 83], ['f6', 1379, 88], ['f7', 1672, 93], ['f8', 1963, 98], ['f90', 2251, 103],
  ['fH', 60, 220], ['EG', 67, 336], ['fF', 68, 359], ['fB', 82, 579], ['fA', 86, 631],
  ['fH', 2459, 262], ['EG', 2466, 375], ['fF', 2469, 399], ['fB', 2481, 619], ['fA', 2485, 672],
];

const dims: [string, number, number][] = [
  ['900400', 220, 305], ['8500', 236, 468], ['2000', 244, 604], ['5600', 251, 700], ['32324', 193, 637],
  ['900400', 2338, 342], ['8500', 2350, 505], ['2000', 2357, 640], ['5600', 2363, 735],
];

function Viewport() {
  return (
    <svg viewBox="0 0 2697 1074" preserveAspectRatio="xMinYMin slice" className="min-h-0 w-full flex-1 bg-black" role="img" aria-label="三维视图">
      <g transform="translate(0 327)">
        {dims.map(([t, x, y], i) => (
          <text key={i} transform={`translate(${x} ${y}) rotate(-90)`} textAnchor="middle" dominantBaseline="central" fontSize="46" fill="#ddd">
            {t}
          </text>
        ))}
        <text x="2273" y="220" fontSize="46" fill="#ddd">0</text>
        {parts.map((p) => (
          <g key={p.x} transform={`translate(${p.x} 0)`} shapeRendering="crispEdges">
            {p.lines.map(([c, d]) => (
              <path key={c} d={d} stroke={c} strokeWidth="3" fill="none" />
            ))}
            {p.polys.map(([c, pts], i) => (
              <polygon key={i} points={pts} fill={c} />
            ))}
            {p.openings.map(([x, y]) => (
              <Fragment key={x}>
                <rect x={x} y={y} width="25" height="24" fill="#000" />
                <path d={`M${x} ${y + 9}h25`} stroke={AXIS} strokeWidth="3" />
                <path d={`M${x - 2} ${y + 25}h25`} stroke={LIT} strokeWidth="5" />
              </Fragment>
            ))}
          </g>
        ))}
        {bubbles.map(([t, x, y], i) => (
          <g key={i}>
            <circle cx={x} cy={y} r="38" fill="none" stroke={AXIS} strokeWidth="3" />
            <text x={x} y={y + 15} textAnchor="middle" fontSize="46" fontWeight="500" fill="#eee">{t}</text>
          </g>
        ))}
        <g fill="none" stroke="#fff" strokeOpacity=".55" strokeWidth="3">
          <circle cx="1351" cy="636" r="855" />
          <circle cx="1351" cy="-219" r="54" />
          <circle cx="496" cy="636" r="54" />
          <circle cx="2206" cy="636" r="54" />
        </g>
      </g>
    </svg>
  );
}

/* ---------- property editor ---------- */

type Prop = { name: string; value?: string; check?: boolean; muted?: boolean; swatch?: boolean; child?: boolean; group?: boolean };

const props: Prop[] = [
  { name: '名称', value: 'CT-2' },
  { name: '高度(mm)', value: '500', check: true, muted: true },
  { name: '顶标高(m)', value: '层底标高+0.5', check: true },
  { name: '底标高(m)', value: '层底标高', check: true },
  { name: '扣减板/筏板面筋', value: '全部扣减', check: true },
  { name: '扣减板/筏板底筋', value: '全部扣减', check: true },
  { name: '计算设置', value: '按默认计算设置计算' },
  { name: '节点设置', value: '按默认节点设置计算' },
  { name: '搭接设置', value: '按默认搭接设置计算' },
  { name: '保护层厚度(mm)', value: '(40)' },
  { name: '汇总信息', value: '桩承台', check: true },
  { name: '备注', check: true },
  { name: '显示样式', muted: true, group: true },
  { name: '边框颜色', swatch: true, child: true },
  { name: '填充颜色', swatch: true, child: true },
  { name: '不透明度', value: '100', child: true },
];

const cell = 'border-r border-b border-[#c0c0c0] p-0 font-normal';

function PropertyPanel() {
  return (
    <aside className="flex w-[358px] shrink-0 flex-col">
      <PanelHeader title="属性编辑器" />
      <div className="mt-px min-h-0 flex-1 border border-b-0 border-[#a0a0a0] bg-white p-px pr-px">
        <table className="w-full table-fixed border-separate border-spacing-0">
          <colgroup>
            <col className="w-[21px]" />
            <col className="w-[121px]" />
            <col />
            <col className="w-[31px]" />
          </colgroup>
          <thead>
            <tr className="h-[23px]">
              <th className={clsx(cell, 'bg-[#f3f3f3]')} />
              <th className={clsx(cell, 'bg-linear-to-b from-white to-[#f0f0f0]')}>属性名称</th>
              <th className={clsx(cell, 'bg-linear-to-b from-[#fad99b] to-[#f2bf5c] text-[#500050]')}>属性值</th>
              <th className={clsx(cell, 'bg-linear-to-b from-white to-[#f0f0f0]')}>附加</th>
            </tr>
          </thead>
          <tbody>
            {props.map((p, i) => (
              <tr key={p.name} className={clsx('h-[19px]', p.muted && 'text-[#808080]')}>
                <td className={clsx(cell, 'text-center', i === 0 ? 'bg-[#ffd48a] text-[#500050]' : 'bg-[#f3f3f3] text-black')}>{i + 1}</td>
                <th scope="row" className={clsx(cell, 'text-left', i === 0 && 'bg-[#0078d7] text-white')}>
                  <div className="flex h-[18px] items-center whitespace-nowrap">
                    {p.group ? (
                      <button aria-label="折叠" className="mr-[5px] ml-[2px] flex size-[13px] items-center justify-center border border-[#c0c0c0]">
                        <span className="h-px w-[7px] bg-black" />
                      </button>
                    ) : p.child ? (
                      <>
                        <span className={clsx('ml-2 border-l border-[#c0c0c0]', i === props.length - 1 ? 'h-[9px] self-start' : 'h-[18px]')} />
                        <span className="mr-[5px] w-4 border-t border-[#c0c0c0]" />
                      </>
                    ) : (
                      <span className="w-5" />
                    )}
                    {p.name}
                  </div>
                </th>
                <td className={clsx(cell, i === 0 && 'bg-[#d8e9f8]')}>
                  {p.swatch ? (
                    <div className="px-1">
                      <button aria-label={p.name} className="block h-[14px] w-full border border-black bg-[#808000]" />
                    </div>
                  ) : (
                    <span className="block pl-0.5 leading-[18px]">{p.value}</span>
                  )}
                </td>
                <td className={cell}>
                  {p.check && <input type="checkbox" aria-label={`附加 ${p.name}`} className="mx-auto block size-[13px] appearance-none border border-[#333] bg-white" />}
                </td>
              </tr>
            ))}
          </tbody>
        </table>
      </div>
    </aside>
  );
}

/* ---------- page ---------- */

export default function App() {
  return (
    <div className="relative flex h-screen flex-col overflow-hidden bg-[#f0f0f0] font-['Noto_Sans_CJK_SC',sans-serif] text-xs leading-4 text-black">
      <TitleBar />
      <MenuBar />
      <MainToolbar />
      <main className="flex min-h-0 flex-1">
        <ModulePanel />
        <div className="ml-1 flex">
          <ComponentPanel />
        </div>
        <section className="ml-[3px] flex min-w-0 flex-1 flex-col">
          <EditBars />
          <Viewport />
        </section>
        <div className="ml-1 flex">
          <PropertyPanel />
        </div>
      </main>

      {/* highlight around the floor picker */}
      <div className="pointer-events-none absolute top-[34px] right-[38px] h-[52px] w-[105px] border-3 border-[#ff0000]" />

      {/* floating download badge */}
      <div className="absolute right-0 bottom-6 flex h-[25px] w-[86px] items-center overflow-hidden rounded-l border border-r-0 border-[#3d8bff] bg-[#bcd8ff] whitespace-nowrap text-[#6fa5f7]">
        <span className="flex h-full w-[29px] shrink-0 items-center justify-center bg-[#5a9bff]">
          <svg viewBox="0 0 20 16" className="h-4 w-5" fill="none" stroke="#fff" strokeWidth="2.500" aria-hidden="true">
            <circle cx="10" cy="5" r="3.600" />
            <circle cx="5" cy="11" r="3.600" />
            <circle cx="15" cy="11" r="3.600" />
          </svg>
        </span>
        <svg viewBox="0 0 8 10" className="mr-1 ml-[3px] h-[10px] w-2 shrink-0" fill="none" aria-hidden="true">
          <path d="M4 0v8M1 5.500l3 3 3-3" stroke="#2f7ff5" strokeWidth="1.800" />
        </svg>
        101 KB
      </div>
    </div>
  );
}
